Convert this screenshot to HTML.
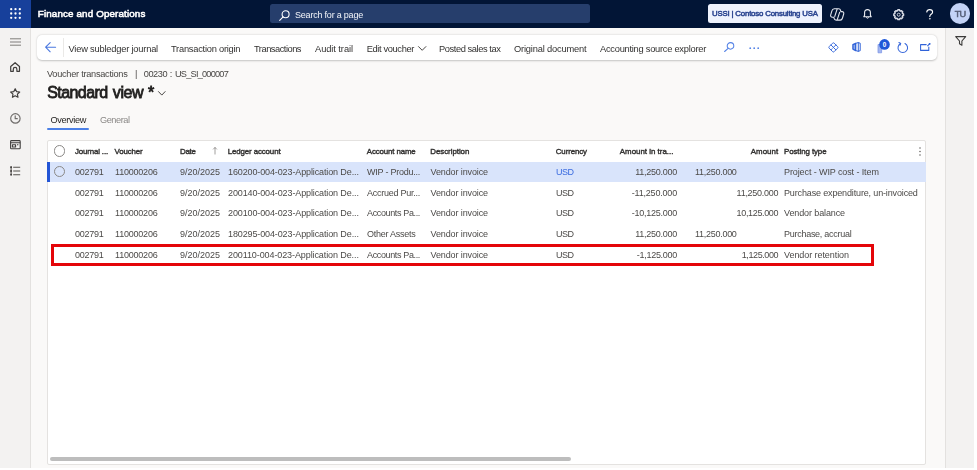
<!DOCTYPE html>
<html lang="en"><head><meta charset="utf-8"><title>Voucher transactions</title>
<style>
html,body{margin:0;padding:0;}
body{width:977px;height:470px;overflow:hidden;position:relative;background:#faf9f8;font-family:"Liberation Sans",sans-serif;}
.abs{position:absolute;}
.t{position:absolute;white-space:nowrap;}
#txt{left:0;top:0;width:977px;height:470px;will-change:transform;}
svg{position:absolute;overflow:visible;}
#topbar{left:0;top:0;width:977px;height:28px;background:#021536;}
#waffle{left:0;top:0;width:31px;height:28px;background:#17409b;}
#search{left:270.3px;top:4px;width:319.7px;height:19px;background:#263e6c;border-radius:2.5px;}
#company{left:708.3px;top:4.2px;width:113.4px;height:18.8px;background:#eef2fd;border-radius:2.5px;}
#avatar{left:949.7px;top:3.1px;width:20.6px;height:20.6px;border-radius:50%;background:#c3d3f7;}
#nav{left:0;top:28px;width:30px;height:442px;background:#f3f2f1;border-right:1px solid #e3e1df;}
#right{left:945px;top:28px;width:32px;height:442px;background:#f3f2f1;border-left:1px solid #e3e1df;box-sizing:border-box;}
#toolbar{left:37px;top:35px;width:900px;height:25px;background:#fff;border-radius:5px;box-shadow:0 0.5px 2px rgba(0,0,0,.22);}
#tbsep{left:62.5px;top:38px;width:1px;height:19px;background:#eae9e7;}
#tabline{left:47.3px;top:128.2px;width:41.7px;height:1.7px;background:#4c80e6;border-radius:1px;}
#grid{left:47px;top:140px;width:879px;height:325px;background:#fff;border:1px solid #e4e2e0;box-sizing:border-box;border-radius:2px;}
#selrow{left:48px;top:161.5px;width:877.7px;height:20.3px;background:#d9e4fb;}
#selbar{left:47.3px;top:161.5px;width:2.5px;height:20.3px;background:#2456d6;}
#redbox{left:51.2px;top:244px;width:823.1px;height:22px;border:3px solid #e40509;box-sizing:border-box;}
#hscroll{left:50px;top:457.3px;width:521px;height:4.2px;background:#bdbdbd;border-radius:2px;}
.circ{width:11.4px;height:11.4px;border:1px solid #8a8886;border-radius:50%;box-sizing:border-box;background:#fff;}
</style></head><body>
<div id="topbar" class="abs"></div>
<div id="waffle" class="abs"></div>
<div id="search" class="abs"></div>
<div id="company" class="abs"></div>
<div id="avatar" class="abs"></div>
<div id="nav" class="abs"></div>
<div id="right" class="abs"></div>
<div id="toolbar" class="abs"></div>
<div id="tbsep" class="abs"></div>
<div id="tabline" class="abs"></div>
<div id="grid" class="abs"></div>
<div id="selrow" class="abs"></div>
<div id="selbar" class="abs"></div>
<div id="hscroll" class="abs"></div>
<div class="abs circ" style="left:53.9px;top:145.3px;"></div>
<div class="abs circ" style="left:53.6px;top:165.9px;background:transparent;"></div>
<!-- waffle -->
<svg style="left:10.2px;top:8.3px" width="11" height="11" viewBox="0 0 11 11" fill="#fff"><circle cx="1.2" cy="1.2" r="1.15"/><circle cx="5.5" cy="1.2" r="1.15"/><circle cx="9.8" cy="1.2" r="1.15"/><circle cx="1.2" cy="5.5" r="1.15"/><circle cx="5.5" cy="5.5" r="1.15"/><circle cx="9.8" cy="5.5" r="1.15"/><circle cx="1.2" cy="9.8" r="1.15"/><circle cx="5.5" cy="9.8" r="1.15"/><circle cx="9.8" cy="9.8" r="1.15"/></svg>
<!-- search icon top -->
<svg style="left:279.2px;top:9.7px" width="11" height="11" viewBox="0 0 11 11" fill="none" stroke="#fff" stroke-width="1.1" stroke-linecap="round"><circle cx="6.6" cy="4.3" r="3.5"/><path d="M4.1 6.9L.7 10.3"/></svg>
<!-- copilot -->
<svg style="left:830px;top:7.900px" width="14.400" height="12.800" viewBox="0 0 14.400 12.800" fill="none" stroke="#e3e6ee" stroke-width="1.100" stroke-linejoin="round"><path d="M5.300.700h3.300c1 0 1.700.5 1.900 1.400l.400 1.500h1.100c1.400 0 2.100 1.100 1.700 2.400l-1.200 4c-.3 1.100-1.100 2.100-2.300 2.100H6.100c-1 0-1.700-.5-1.900-1.400l-.400-1.500H2.400C1 9.200.3 8.100.7 6.800l1.200-4C2.200 1.700 3 .7 4.200.7z"/><path d="M7.200.900L4.600 8.900M9.800 3.900L7.200 11.900"/></svg>
<!-- bell -->
<svg style="left:863.400px;top:8.500px" width="9" height="10.600" viewBox="0 0 9 10.600" fill="none" stroke="#eef0f5" stroke-width="1.100" stroke-linejoin="round"><path d="M4.500.600c-1.800 0-2.900 1.300-2.900 3v2.600L.800 7.800h7.400l-.8-1.600V3.600c0-1.700-1.100-3-2.900-3z"/><path d="M3.500 8.200c0 .7.400 1.100 1 1.100s1-.4 1-1.100" stroke-width=".9"/></svg>
<!-- gear -->
<svg style="left:892.8px;top:8.600px" width="11.400" height="11.400" viewBox="0 0 11.400 11.400" fill="none" stroke="#d9dce5" stroke-linejoin="round"><path stroke-width="1.500" d="M4.86 0.87L6.54 0.87L6.78 1.75L7.73 2.14L8.52 1.69L9.71 2.88L9.26 3.67L9.65 4.62L10.53 4.86L10.53 6.54L9.65 6.78L9.26 7.73L9.71 8.52L8.52 9.71L7.73 9.26L6.78 9.65L6.54 10.53L4.86 10.53L4.62 9.65L3.67 9.26L2.88 9.71L1.69 8.52L2.14 7.73L1.75 6.78L0.87 6.54L0.87 4.86L1.75 4.62L2.14 3.67L1.69 2.88L2.88 1.69L3.67 2.14L4.62 1.75Z"/><circle cx="5.700" cy="5.700" r="1.500" stroke-width=".9"/></svg>
<!-- help -->
<svg style="left:925.8px;top:8.800px" width="7.500" height="10.600" viewBox="0 0 7.500 10.600" fill="none" stroke="#fff" stroke-width="1.150" stroke-linecap="round"><path d="M.800 3c0-1.400 1.200-2.400 2.900-2.400s2.900 1 2.900 2.400c0 1.200-.700 1.700-1.500 2.300-.800.600-1.300 1-1.300 2.200"/><circle cx="3.800" cy="9.800" r=".45" fill="#fff" stroke-width=".5"/></svg>
<!-- hamburger -->
<svg style="left:10.200px;top:37.500px" width="11" height="8" viewBox="0 0 11 8" stroke="#6b6966" stroke-width=".85" fill="none"><path d="M0 .8h11M0 4h11M0 7.200h11"/></svg>
<!-- home -->
<svg style="left:10.4px;top:62.2px" width="10.2" height="10" viewBox="0 0 10.2 10" fill="none" stroke="#403e3c" stroke-width="1.2" stroke-linejoin="round"><path d="M.7 4.5L5.1.7l4.400 3.800v4.800H6.900V7.200a1.800 1.800 0 0 0-3.600 0v2.100H.700z"/></svg>
<!-- star -->
<svg style="left:10.2px;top:88px" width="10.400" height="9.900" viewBox="0 0 10.800 10.200" fill="none" stroke="#403e3c" stroke-width="1.200" stroke-linejoin="round"><path d="M5.400.700l1.400 3 3.300.4-2.400 2.300.6 3.200-2.900-1.600-2.900 1.600.6-3.200L.700 4.100l3.300-.4z"/></svg>
<!-- clock -->
<svg style="left:9.900px;top:113.300px" width="10.800" height="10.800" viewBox="0 0 10.800 10.800" fill="none" stroke="#6e6c6a" stroke-width="1.150" stroke-linecap="round" stroke-linejoin="round"><circle cx="5.400" cy="5.400" r="4.700"/><path d="M5.200 2.900v2.800h2.100"/></svg>
<!-- workspace -->
<svg style="left:9.900px;top:139.700px" width="10.800" height="9.400" viewBox="0 0 10.800 9.400" fill="none" stroke="#403e3c" stroke-width="1.100" stroke-linejoin="round"><rect x=".6" y=".6" width="9.600" height="8.200" rx=".8"/><path d="M.600 2.700h9.600M2.400 4.700h3.200v2.300H2.400zM7 4.700h1.400" /></svg>
<!-- modules list -->
<svg style="left:10px;top:165.600px" width="10.200" height="9.800" viewBox="0 0 10.200 9.800" fill="none" stroke="#55534f" stroke-width="1.050"><path d="M3.200 1.300h7M3.200 5h7M3.200 8.700h7M1.100.300v8.400"/><circle cx="1.100" cy="1.300" r=".95" fill="#403e3c" stroke="none"/><circle cx="1.100" cy="5" r=".95" fill="#403e3c" stroke="none"/><circle cx="1.100" cy="8.700" r=".95" fill="#403e3c" stroke="none"/></svg>
<!-- back arrow -->
<svg style="left:45.200px;top:42px" width="11" height="10.400" viewBox="0 0 11 10.400" fill="none" stroke="#4a78e0" stroke-width="1.100" stroke-linecap="round" stroke-linejoin="round"><path d="M5.200.600L.600 5.200l4.600 4.600M.800 5.200h9.800"/></svg>
<!-- edit voucher chevron -->
<svg style="left:418px;top:45.500px" width="8.400" height="5" viewBox="0 0 8.400 5" fill="none" stroke="#484644" stroke-width="1" stroke-linecap="round" stroke-linejoin="round"><path d="M.500.600l3.700 3.700L7.900.600"/></svg>
<!-- toolbar search -->
<svg style="left:724px;top:42.300px" width="10.400" height="10" viewBox="0 0 10.400 10" fill="none" stroke="#5583e6" stroke-width="1.050" stroke-linecap="round"><circle cx="6.500" cy="3.900" r="3.300"/><path d="M4.100 6.300L.600 9.500"/></svg>
<!-- more dots -->
<svg style="left:749.400px;top:46.800px" width="11" height="2.400" viewBox="0 0 11 2.400" fill="#5583e6"><circle cx="1.200" cy="1.200" r=".9"/><circle cx="5.200" cy="1.200" r=".9"/><circle cx="9.200" cy="1.200" r=".9"/></svg>
<!-- power apps diamond -->
<svg style="left:828.300px;top:42.100px" width="10.800" height="10.800" viewBox="0 0 10.800 10.800" fill="none" stroke="#3d6ddc" stroke-width="1" stroke-linejoin="round" stroke-linecap="round"><path d="M4.700 1.100a1 1 0 0 1 1.400 0l3.600 3.600a1 1 0 0 1 0 1.400L6.100 9.700a1 1 0 0 1-1.400 0L1.100 6.100a1 1 0 0 1 0-1.400z"/><path d="M3 3l4.800 4.800M7.800 3L5.400 5.400M3 7.800l1.200-1.200"/></svg>
<!-- office -->
<svg style="left:852.200px;top:42.300px" width="8.800" height="9.900" viewBox="0 0 8.800 9.900" fill="none" stroke="#2f62d8" stroke-linejoin="round" stroke-linecap="round"><path d="M3.700 1.300L.900 2.700v4.400l2.800 1.500z" stroke-width="1.300" fill="#2f62d8" fill-opacity=".55"/><path d="M3.700 1.300L6.300.600l1.900.600v7.500l-1.900.6-2.600-.7" stroke-width="1"/><path d="M6.300.600v8.700" stroke-width="1"/></svg>
<!-- doc + badge -->
<svg style="left:877px;top:38.500px" width="14" height="14.500" viewBox="0 0 14 14.500"><path d="M1 5.500h3.600v8.300H1z" fill="#a3b6ef" stroke="#7f97e6" stroke-width=".8" stroke-linejoin="round"/><circle cx="7.500" cy="5.400" r="5.300" fill="#1f58d8"/><text x="7.500" y="7.600" text-anchor="middle" font-family="Liberation Sans, sans-serif" font-size="6.300" font-weight="700" fill="#fff">0</text></svg>
<!-- refresh -->
<svg style="left:896.800px;top:41.500px" width="11.600" height="11.600" viewBox="0 0 11.600 11.600" fill="none" stroke="#3767da" stroke-width="1.050" stroke-linecap="round" stroke-linejoin="round"><path d="M3.600 1.500A4.800 4.800 0 1 0 8 1.500"/><path d="M3.700 1.400L1.900.600M3.700 1.400L3 3.200" /></svg>
<!-- popout -->
<svg style="left:919.800px;top:43px" width="10.600" height="8" viewBox="0 0 10.600 8" fill="none" stroke="#2f62d8" stroke-width="1.050" stroke-linejoin="round" stroke-linecap="round"><path d="M6.200 1.600H.600v5.800h8.200V4"/><path d="M7.600 2.800L9.800.600"/><circle cx="9.600" cy=".9" r=".9" fill="#2f62d8" stroke="none"/></svg>
<!-- filter -->
<svg style="left:954.800px;top:36px" width="11.400" height="9.800" viewBox="0 0 11.400 9.800" fill="none" stroke="#3b3a39" stroke-width="1.100" stroke-linejoin="round"><path d="M.700.600h10L6.900 5v4.200L4.500 7.800V5z"/></svg>
<!-- title chevron -->
<svg style="left:157.900px;top:91.300px" width="7.600" height="4.800" viewBox="0 0 7.600 4.800" fill="none" stroke="#484644" stroke-width="1" stroke-linecap="round" stroke-linejoin="round"><path d="M.500.600l3.300 3.500L7.100.600"/></svg>
<!-- sort arrow -->
<svg style="left:213.100px;top:147.200px" width="4" height="7.400" viewBox="0 0 4 7.400" fill="none" stroke="#8a8886" stroke-width=".8" stroke-linecap="round" stroke-linejoin="round"><path d="M2 .500v6.600M.400 2.100L2 .500l1.600 1.600"/></svg>
<!-- grid options dots -->
<svg style="left:919.300px;top:147px" width="2" height="9" viewBox="0 0 2 9" fill="#6b6966"><circle cx="1" cy="1" r=".8"/><circle cx="1" cy="4.500" r=".8"/><circle cx="1" cy="8" r=".8"/></svg>

<div id="txt" class="abs">
<span class="t" style="left:37.8px;top:7.2px;font-size:9.8px;line-height:13.7px;font-weight:400;color:#ffffff;letter-spacing:0.142px;-webkit-text-stroke:0.55px #ffffff;">Finance and Operations</span>
<span class="t" style="left:295.0px;top:8.8px;font-size:9.0px;line-height:12.6px;font-weight:400;color:#f3f5fa;letter-spacing:-0.210px;">Search for a page</span>
<span class="t" style="left:712.0px;top:8.8px;font-size:7.8px;line-height:10.9px;font-weight:400;color:#2a4490;letter-spacing:-0.173px;-webkit-text-stroke:0.50px #2a4490;">USSI | Contoso Consulting USA</span>
<span class="t" style="left:954.7px;top:8.0px;font-size:9.2px;line-height:12.9px;font-weight:400;color:#566079;letter-spacing:-0.875px;-webkit-text-stroke:0.55px #566079;">TU</span>
<span class="t" style="left:68.5px;top:42.6px;font-size:9.3px;line-height:13.0px;font-weight:400;color:#323130;letter-spacing:-0.200px;">View subledger journal</span>
<span class="t" style="left:171.0px;top:42.6px;font-size:9.3px;line-height:13.0px;font-weight:400;color:#323130;letter-spacing:-0.237px;">Transaction origin</span>
<span class="t" style="left:254.0px;top:42.6px;font-size:9.3px;line-height:13.0px;font-weight:400;color:#323130;letter-spacing:-0.491px;">Transactions</span>
<span class="t" style="left:315.0px;top:42.6px;font-size:9.3px;line-height:13.0px;font-weight:400;color:#323130;letter-spacing:-0.070px;">Audit trail</span>
<span class="t" style="left:366.7px;top:42.6px;font-size:9.3px;line-height:13.0px;font-weight:400;color:#323130;letter-spacing:-0.366px;">Edit voucher</span>
<span class="t" style="left:439.0px;top:42.6px;font-size:9.3px;line-height:13.0px;font-weight:400;color:#323130;letter-spacing:-0.420px;">Posted sales tax</span>
<span class="t" style="left:514.0px;top:42.6px;font-size:9.3px;line-height:13.0px;font-weight:400;color:#323130;letter-spacing:-0.174px;">Original document</span>
<span class="t" style="left:600.0px;top:42.6px;font-size:9.3px;line-height:13.0px;font-weight:400;color:#323130;letter-spacing:-0.257px;">Accounting source explorer</span>
<span class="t" style="left:47.0px;top:67.5px;font-size:9.2px;line-height:12.9px;font-weight:400;color:#484644;letter-spacing:-0.266px;">Voucher transactions</span>
<span class="t" style="left:135.1px;top:67.5px;font-size:9.2px;line-height:12.9px;font-weight:400;color:#484644;letter-spacing:0.000px;">|</span>
<span class="t" style="left:143.8px;top:67.5px;font-size:9.2px;line-height:12.9px;font-weight:400;color:#484644;letter-spacing:-0.453px;">00230</span>
<span class="t" style="left:169.7px;top:67.5px;font-size:9.2px;line-height:12.9px;font-weight:400;color:#484644;letter-spacing:0.000px;">:</span>
<span class="t" style="left:175.0px;top:67.5px;font-size:9.2px;line-height:12.9px;font-weight:400;color:#484644;letter-spacing:-0.777px;">US_SI_000007</span>
<span class="t" style="left:47.2px;top:82.3px;font-size:16.0px;line-height:22.4px;font-weight:400;color:#201f1e;letter-spacing:-0.567px;-webkit-text-stroke:0.80px #201f1e;">Standard</span>
<span class="t" style="left:112.8px;top:82.3px;font-size:16.0px;line-height:22.4px;font-weight:400;color:#201f1e;letter-spacing:-0.404px;-webkit-text-stroke:0.80px #201f1e;">view</span>
<span class="t" style="left:147.9px;top:82.3px;font-size:16.0px;line-height:22.4px;font-weight:400;color:#201f1e;letter-spacing:0.000px;-webkit-text-stroke:0.80px #201f1e;">*</span>
<span class="t" style="left:50.5px;top:113.8px;font-size:9.2px;line-height:12.9px;font-weight:400;color:#201f1e;letter-spacing:-0.350px;">Overview</span>
<span class="t" style="left:100.0px;top:113.8px;font-size:9.2px;line-height:12.9px;font-weight:400;color:#8a8886;letter-spacing:-0.455px;">General</span>
<span class="t" style="left:75.0px;top:145.8px;font-size:7.9px;line-height:11.1px;font-weight:400;color:#323130;letter-spacing:-0.151px;-webkit-text-stroke:0.40px #323130;">Journal ...</span>
<span class="t" style="left:114.5px;top:145.8px;font-size:7.9px;line-height:11.1px;font-weight:400;color:#323130;letter-spacing:-0.138px;-webkit-text-stroke:0.40px #323130;">Voucher</span>
<span class="t" style="left:180.0px;top:145.8px;font-size:7.9px;line-height:11.1px;font-weight:400;color:#323130;letter-spacing:-0.293px;-webkit-text-stroke:0.40px #323130;">Date</span>
<span class="t" style="left:227.7px;top:145.8px;font-size:7.9px;line-height:11.1px;font-weight:400;color:#323130;letter-spacing:-0.115px;-webkit-text-stroke:0.40px #323130;">Ledger account</span>
<span class="t" style="left:366.8px;top:145.8px;font-size:7.9px;line-height:11.1px;font-weight:400;color:#323130;letter-spacing:-0.138px;-webkit-text-stroke:0.40px #323130;">Account name</span>
<span class="t" style="left:430.3px;top:145.8px;font-size:7.9px;line-height:11.1px;font-weight:400;color:#323130;letter-spacing:-0.043px;-webkit-text-stroke:0.40px #323130;">Description</span>
<span class="t" style="left:555.8px;top:145.8px;font-size:7.9px;line-height:11.1px;font-weight:400;color:#323130;letter-spacing:-0.127px;-webkit-text-stroke:0.40px #323130;">Currency</span>
<span class="t" style="left:619.8px;top:145.8px;font-size:7.9px;line-height:11.1px;font-weight:400;color:#323130;letter-spacing:0.005px;-webkit-text-stroke:0.40px #323130;">Amount in tra...</span>
<span class="t" style="left:750.8px;top:145.8px;font-size:7.9px;line-height:11.1px;font-weight:400;color:#323130;letter-spacing:0.033px;-webkit-text-stroke:0.40px #323130;">Amount</span>
<span class="t" style="left:784.0px;top:145.8px;font-size:7.9px;line-height:11.1px;font-weight:400;color:#323130;letter-spacing:-0.078px;-webkit-text-stroke:0.40px #323130;">Posting type</span>
<span class="t" style="left:75.0px;top:166.2px;font-size:9.0px;line-height:12.6px;font-weight:400;color:#4c4a48;letter-spacing:-0.258px;">002791</span>
<span class="t" style="left:115.0px;top:166.2px;font-size:9.0px;line-height:12.6px;font-weight:400;color:#4c4a48;letter-spacing:-0.210px;">110000206</span>
<span class="t" style="left:180.0px;top:166.2px;font-size:9.0px;line-height:12.6px;font-weight:400;color:#4c4a48;letter-spacing:-0.005px;">9/20/2025</span>
<span class="t" style="left:228.0px;top:166.2px;font-size:9.0px;line-height:12.6px;font-weight:400;color:#4c4a48;letter-spacing:-0.119px;">160200-004-023-Application De...</span>
<span class="t" style="left:367.0px;top:166.2px;font-size:9.0px;line-height:12.6px;font-weight:400;color:#4c4a48;letter-spacing:-0.240px;">WIP - Produ...</span>
<span class="t" style="left:430.5px;top:166.2px;font-size:9.0px;line-height:12.6px;font-weight:400;color:#4c4a48;letter-spacing:-0.110px;">Vendor invoice</span>
<span class="t" style="left:556.0px;top:166.2px;font-size:9.0px;line-height:12.6px;font-weight:400;color:#3a6be0;letter-spacing:-0.539px;">USD</span>
<span class="t" style="left:635.3px;top:166.2px;font-size:9.0px;line-height:12.6px;font-weight:400;color:#4c4a48;letter-spacing:-0.269px;">11,250.000</span>
<span class="t" style="left:695.0px;top:166.2px;font-size:9.0px;line-height:12.6px;font-weight:400;color:#4c4a48;letter-spacing:-0.279px;">11,250.000</span>
<span class="t" style="left:784.0px;top:166.2px;font-size:9.0px;line-height:12.6px;font-weight:400;color:#4c4a48;letter-spacing:-0.102px;">Project - WIP cost - Item</span>
<span class="t" style="left:75.0px;top:186.6px;font-size:9.0px;line-height:12.6px;font-weight:400;color:#4c4a48;letter-spacing:-0.258px;">002791</span>
<span class="t" style="left:115.0px;top:186.6px;font-size:9.0px;line-height:12.6px;font-weight:400;color:#4c4a48;letter-spacing:-0.210px;">110000206</span>
<span class="t" style="left:180.0px;top:186.6px;font-size:9.0px;line-height:12.6px;font-weight:400;color:#4c4a48;letter-spacing:-0.005px;">9/20/2025</span>
<span class="t" style="left:228.0px;top:186.6px;font-size:9.0px;line-height:12.6px;font-weight:400;color:#4c4a48;letter-spacing:-0.119px;">200140-004-023-Application De...</span>
<span class="t" style="left:367.0px;top:186.6px;font-size:9.0px;line-height:12.6px;font-weight:400;color:#4c4a48;letter-spacing:-0.252px;">Accrued Pur...</span>
<span class="t" style="left:430.5px;top:186.6px;font-size:9.0px;line-height:12.6px;font-weight:400;color:#4c4a48;letter-spacing:-0.110px;">Vendor invoice</span>
<span class="t" style="left:556.0px;top:186.6px;font-size:9.0px;line-height:12.6px;font-weight:400;color:#4c4a48;letter-spacing:-0.539px;">USD</span>
<span class="t" style="left:631.7px;top:186.6px;font-size:9.0px;line-height:12.6px;font-weight:400;color:#4c4a48;letter-spacing:-0.189px;">-11,250.000</span>
<span class="t" style="left:736.6px;top:186.6px;font-size:9.0px;line-height:12.6px;font-weight:400;color:#4c4a48;letter-spacing:-0.279px;">11,250.000</span>
<span class="t" style="left:784.0px;top:186.6px;font-size:9.0px;line-height:12.6px;font-weight:400;color:#4c4a48;letter-spacing:-0.148px;">Purchase expenditure, un-invoiced</span>
<span class="t" style="left:75.0px;top:207.3px;font-size:9.0px;line-height:12.6px;font-weight:400;color:#4c4a48;letter-spacing:-0.258px;">002791</span>
<span class="t" style="left:115.0px;top:207.3px;font-size:9.0px;line-height:12.6px;font-weight:400;color:#4c4a48;letter-spacing:-0.210px;">110000206</span>
<span class="t" style="left:180.0px;top:207.3px;font-size:9.0px;line-height:12.6px;font-weight:400;color:#4c4a48;letter-spacing:-0.005px;">9/20/2025</span>
<span class="t" style="left:228.0px;top:207.3px;font-size:9.0px;line-height:12.6px;font-weight:400;color:#4c4a48;letter-spacing:-0.119px;">200100-004-023-Application De...</span>
<span class="t" style="left:367.0px;top:207.3px;font-size:9.0px;line-height:12.6px;font-weight:400;color:#4c4a48;letter-spacing:-0.359px;">Accounts Pa...</span>
<span class="t" style="left:430.5px;top:207.3px;font-size:9.0px;line-height:12.6px;font-weight:400;color:#4c4a48;letter-spacing:-0.110px;">Vendor invoice</span>
<span class="t" style="left:556.0px;top:207.3px;font-size:9.0px;line-height:12.6px;font-weight:400;color:#4c4a48;letter-spacing:-0.539px;">USD</span>
<span class="t" style="left:631.7px;top:207.3px;font-size:9.0px;line-height:12.6px;font-weight:400;color:#4c4a48;letter-spacing:-0.250px;">-10,125.000</span>
<span class="t" style="left:736.6px;top:207.3px;font-size:9.0px;line-height:12.6px;font-weight:400;color:#4c4a48;letter-spacing:-0.345px;">10,125.000</span>
<span class="t" style="left:784.0px;top:207.3px;font-size:9.0px;line-height:12.6px;font-weight:400;color:#4c4a48;letter-spacing:-0.112px;">Vendor balance</span>
<span class="t" style="left:75.0px;top:227.9px;font-size:9.0px;line-height:12.6px;font-weight:400;color:#4c4a48;letter-spacing:-0.258px;">002791</span>
<span class="t" style="left:115.0px;top:227.9px;font-size:9.0px;line-height:12.6px;font-weight:400;color:#4c4a48;letter-spacing:-0.210px;">110000206</span>
<span class="t" style="left:180.0px;top:227.9px;font-size:9.0px;line-height:12.6px;font-weight:400;color:#4c4a48;letter-spacing:-0.005px;">9/20/2025</span>
<span class="t" style="left:228.0px;top:227.9px;font-size:9.0px;line-height:12.6px;font-weight:400;color:#4c4a48;letter-spacing:-0.119px;">180295-004-023-Application De...</span>
<span class="t" style="left:367.0px;top:227.9px;font-size:9.0px;line-height:12.6px;font-weight:400;color:#4c4a48;letter-spacing:-0.244px;">Other Assets</span>
<span class="t" style="left:430.5px;top:227.9px;font-size:9.0px;line-height:12.6px;font-weight:400;color:#4c4a48;letter-spacing:-0.110px;">Vendor invoice</span>
<span class="t" style="left:556.0px;top:227.9px;font-size:9.0px;line-height:12.6px;font-weight:400;color:#4c4a48;letter-spacing:-0.539px;">USD</span>
<span class="t" style="left:635.3px;top:227.9px;font-size:9.0px;line-height:12.6px;font-weight:400;color:#4c4a48;letter-spacing:-0.269px;">11,250.000</span>
<span class="t" style="left:695.0px;top:227.9px;font-size:9.0px;line-height:12.6px;font-weight:400;color:#4c4a48;letter-spacing:-0.279px;">11,250.000</span>
<span class="t" style="left:784.0px;top:227.9px;font-size:9.0px;line-height:12.6px;font-weight:400;color:#4c4a48;letter-spacing:-0.273px;">Purchase, accrual</span>
<span class="t" style="left:75.0px;top:248.6px;font-size:9.0px;line-height:12.6px;font-weight:400;color:#4c4a48;letter-spacing:-0.258px;">002791</span>
<span class="t" style="left:115.0px;top:248.6px;font-size:9.0px;line-height:12.6px;font-weight:400;color:#4c4a48;letter-spacing:-0.210px;">110000206</span>
<span class="t" style="left:180.0px;top:248.6px;font-size:9.0px;line-height:12.6px;font-weight:400;color:#4c4a48;letter-spacing:-0.005px;">9/20/2025</span>
<span class="t" style="left:228.0px;top:248.6px;font-size:9.0px;line-height:12.6px;font-weight:400;color:#4c4a48;letter-spacing:-0.098px;">200110-004-023-Application De...</span>
<span class="t" style="left:367.0px;top:248.6px;font-size:9.0px;line-height:12.6px;font-weight:400;color:#4c4a48;letter-spacing:-0.359px;">Accounts Pa...</span>
<span class="t" style="left:430.5px;top:248.6px;font-size:9.0px;line-height:12.6px;font-weight:400;color:#4c4a48;letter-spacing:-0.110px;">Vendor invoice</span>
<span class="t" style="left:556.0px;top:248.6px;font-size:9.0px;line-height:12.6px;font-weight:400;color:#4c4a48;letter-spacing:-0.539px;">USD</span>
<span class="t" style="left:636.8px;top:248.6px;font-size:9.0px;line-height:12.6px;font-weight:400;color:#4c4a48;letter-spacing:-0.285px;">-1,125.000</span>
<span class="t" style="left:741.7px;top:248.6px;font-size:9.0px;line-height:12.6px;font-weight:400;color:#4c4a48;letter-spacing:-0.394px;">1,125.000</span>
<span class="t" style="left:784.0px;top:248.6px;font-size:9.0px;line-height:12.6px;font-weight:400;color:#4c4a48;letter-spacing:-0.066px;">Vendor retention</span>
</div>
<div id="redbox" class="abs"></div>
<div class="abs" style="left:974px;top:0;width:3px;height:470px;background:#fff;"></div>
<div class="abs" style="left:0;top:467.7px;width:977px;height:2.3px;background:#fff;"></div>
</body></html>
